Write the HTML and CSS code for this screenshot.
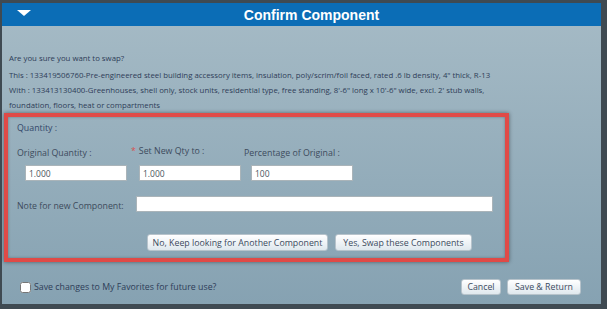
FILE: index.html
```html
<!DOCTYPE html>
<html lang="en">
<head>
    <meta charset="UTF-8">
    <title>Confirm Component</title>
    <link rel="stylesheet" href="styles.css">
</head>
<body>
    <div class="dialog">
        <div class="header">
            <span class="toggle"></span>
            <h2>Confirm Component</h2>
        </div>
        <div class="content">
            <div class="info">
                <p class="question">Are you sure you want to swap?</p>
                <p>This : 133419506760-Pre-engineered steel building accessory items, insulation, poly/scrim/foil faced, rated .6 lb density, 4" thick, R-13</p>
                <p>With : 133413130400-Greenhouses, shell only, stock units, residential type, free standing, 8'-6" long x 10'-6" wide, excl. 2' stub walls, foundation, floors, heat or compartments</p>
            </div>

            <div class="swap-box">
                <div class="section-title">Quantity :</div>
                <div class="fields">
                    <div class="field f1">
                        <label>Original Quantity :</label>
                        <input type="text" value="1.000">
                    </div>
                    <div class="field f2">
                        <label><span class="req">*</span>Set New Qty to :</label>
                        <input type="text" value="1.000">
                    </div>
                    <div class="field f3">
                        <label>Percentage of Original :</label>
                        <input type="text" value="100">
                    </div>
                </div>
                <div class="note-row">
                    <label>Note for new Component:</label>
                    <input type="text" class="note">
                </div>
                <div class="actions">
                    <button type="button" class="btn-no">No, Keep looking for Another Component</button>
                    <button type="button" class="btn-yes">Yes, Swap these Components</button>
                </div>
            </div>

            <div class="footer">
                <label class="fav"><input type="checkbox"> Save changes to My Favorites for future use?</label>
                <div class="footer-btns">
                    <button type="button" class="btn-cancel">Cancel</button>
                    <button type="button" class="btn-save">Save &amp; Return</button>
                </div>
            </div>
        </div>
    </div>
</body>
</html>
```

FILE: styles.css
```css
body {
    margin: 0;
    padding: 3px 6px 5px 2px;
    background: #3f4a52;
    font-family: "Open Sans", "Liberation Sans", sans-serif;
    font-size: 8.8px;
    color: #2e3d58;
}
.dialog {
    width: 599px;
    height: 301px;
    display: flex;
    flex-direction: column;
    overflow: hidden;
    background: linear-gradient(#a6bbc6, #86a2b2);
}
.header {
    flex-shrink: 0;
    height: 23px;
    background: #0b6db6;
    display: flex;
    align-items: center;
    position: relative;
}
.toggle {
    position: absolute;
    left: 15px;
    top: 7px;
    width: 0;
    height: 0;
    border-left: 7px solid transparent;
    border-right: 7px solid transparent;
    border-top: 6px solid #fff;
}
.header h2 {
    margin: 0;
    flex: 1;
    text-align: center;
    padding-left: 20px;
    color: #fff;
    font-family: "Liberation Sans", sans-serif;
    font-size: 14px;
    font-weight: bold;
}
.content {
    padding: 25px 7px 0 7px;
}
.info {
    max-width: 492px;
    font-size: 7.8px;
}
.info p {
    margin: 0;
    line-height: 15px;
}
.info p.question {
    margin-bottom: 2px;
}
.swap-box {
    box-sizing: border-box;
    margin: 0 0 0 -5px;
    width: 505px;
    height: 149px;
    border: 4px solid #e04a47;
    box-shadow: 0 0 4px rgba(0, 0, 0, 0.45), inset 0 0 3px rgba(0, 0, 0, 0.3);
    padding: 5px 0 0 9px;
    color: #3d4b5c;
}
.section-title {
    line-height: 12px;
    color: #33476a;
}
.fields {
    display: flex;
    margin-top: 13px;
}
.field {
    display: flex;
    flex-direction: column;
}
.field label {
    line-height: 12px;
    height: 12px;
}
.field input {
    margin-top: 6px;
}
.f1 {
    width: 114px;
}
.f1 input {
    margin-left: 8px;
}
.f2 {
    width: 113px;
}
.f2 label {
    margin-top: -2px;
}
.f2 input {
    margin-left: 8px;
    margin-top: 8px;
}
.f3 input {
    margin-left: 7px;
}
.req {
    color: #d8504e;
    margin-right: 3px;
}
input[type="text"] {
    width: 102px;
    height: 16px;
    box-sizing: border-box;
    border: 1px solid #aab4b9;
    background: #fff;
    padding: 0 3px;
    font-family: inherit;
    font-size: 8.5px;
    color: #4a5560;
    outline: none;
}
.note-row {
    display: flex;
    align-items: flex-end;
    margin-top: 15px;
}
.note-row label {
    width: 119px;
    line-height: 12px;
}
input.note {
    width: 357px;
}
.actions {
    display: flex;
    gap: 7px;
    margin: 22px 0 0 130px;
}
button {
    height: 17px;
    padding: 0;
    border: 1px solid #b7c3cb;
    border-radius: 3px;
    background: linear-gradient(#ffffff, #dfe8ee);
    font-family: inherit;
    font-size: 8.8px;
    color: #3c4b5e;
}
.btn-no {
    width: 181px;
}
.btn-yes {
    width: 137px;
}
.footer {
    display: flex;
    justify-content: space-between;
    align-items: center;
    margin-top: 17px;
    padding-right: 13px;
}
.fav {
    display: flex;
    align-items: center;
    gap: 3px;
    margin-left: 11px;
}
.fav input {
    margin: 0;
    width: 11px;
    height: 11px;
}
.footer-btns {
    display: flex;
    gap: 6px;
}
.footer-btns button {
    height: 16px;
}
.btn-cancel {
    width: 40px;
}
.btn-save {
    width: 74px;
}
```
